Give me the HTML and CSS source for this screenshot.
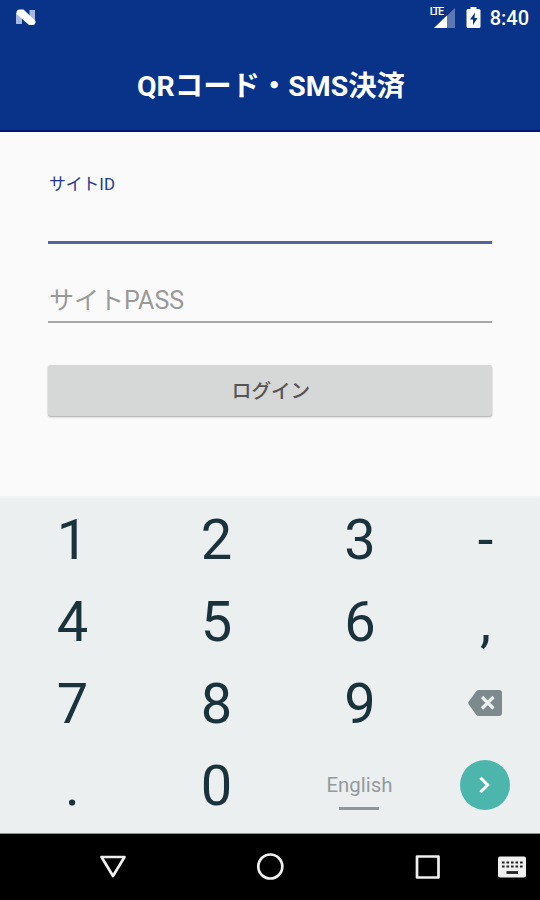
FILE: index.html
```
<!DOCTYPE html>
<html lang="ja">
<head>
  <meta charset="UTF-8" />
  <meta name="viewport" content="width=device-width, initial-scale=1" />
  <title>QRコード・SMS決済</title>
  <link rel="stylesheet" href="styles.css">
</head>
<body>
  <!-- Status bar -->
  <div class="status-bar">
    <svg class="icon-n" width="22" height="18" viewBox="0 0 22 18">
      <path d="M1 4h6v11H1zM14.500 1H20v13h-5.500z" fill="#a9b8de" />
      <path d="M4 .5h4.500L20.500 12v1.500q-.5 2.500-3 2.500H14L1.500 5V3Q2 .5 4 .5z" fill="#fff" />
    </svg>
    <div class="status-icons">
      <div class="signal">
        <span class="lte">LTE</span>
        <svg width="22" height="21" viewBox="0 0 22 21">
          <path d="M21 0v20H0z" fill="#5c78b3" />
          <path d="M13 7.500V20H0z" fill="#fff" />
        </svg>
      </div>
      <svg class="battery" width="15" height="22" viewBox="0 0 15 22">
        <path d="M4.500 0h6v2H13q1.500 0 1.500 1.500v16q0 1.500-1.500 1.500H2q-1.500 0-1.500-1.500v-16Q.5 2 2 2h2.500z" fill="#fff" />
        <path d="M9 5.500L4 12.500h3V18l4.500-7h-3z" fill="#083388" />
      </svg>
      <span class="clock">8:40</span>
    </div>
  </div>

  <!-- Title -->
  <header class="app-bar">
    <h1>QRコード・SMS決済</h1>
  </header>

  <!-- Login form -->
  <main class="login">
    <div class="field active">
      <label>サイトID</label>
    </div>
    <div class="field">
      <label>サイトPASS</label>
    </div>
    <button class="login-button" type="button">ログイン</button>
  </main>

  <!-- Keyboard -->
  <div class="keyboard">
    <div class="key">1</div>
    <div class="key">2</div>
    <div class="key">3</div>
    <div class="key">-</div>
    <div class="key">4</div>
    <div class="key">5</div>
    <div class="key">6</div>
    <div class="key">,</div>
    <div class="key">7</div>
    <div class="key">8</div>
    <div class="key">9</div>
    <div class="key action">
      <svg width="34" height="26" viewBox="0 0 34 26">
        <path d="M10.500 0H31q3 0 3 3v20q0 3-3 3H10.500q-1.500 0-2.500-1.500L.6 14.200q-.7-1.200 0-2.400L8 1.500Q9 0 10.500 0z" fill="#7c898d" />
        <path d="M14 7l11.500 11.500M25.500 7L14 18.500" stroke="#eceff0" stroke-width="3.200" />
      </svg>
    </div>
    <div class="key">.</div>
    <div class="key">0</div>
    <div class="key lang">English</div>
    <div class="key action">
      <span class="enter">
        <svg width="14" height="20" viewBox="0 0 14 20">
          <path d="M2.500 2.800L9.700 10l-7.200 7.200" fill="none" stroke="#fff" stroke-width="3" />
        </svg>
      </span>
    </div>
  </div>

  <!-- Navigation bar -->
  <nav class="nav-bar">
    <svg width="540" height="66" viewBox="0 0 540 66" fill="none" stroke="#f0f0f0" stroke-width="2.700" stroke-linejoin="round">
      <path d="M101.500 23h23L113 42z" />
      <circle cx="270.300" cy="32.500" r="12" />
      <rect x="417" y="22.500" width="21.500" height="21" />
      <rect x="498" y="22.500" width="28" height="21" rx="2" fill="#f0f0f0" stroke="none" />
      <path d="M502 28.500h21M502 32.500h21" stroke="#222" stroke-width="2.200" stroke-dasharray="2.600 1.900" />
      <path d="M506.500 38.500h11.500" stroke="#222" stroke-width="2.800" />
    </svg>
  </nav>
</body>
</html>
```
FILE: styles.css
```
* {
  box-sizing: border-box;
}

body {
  margin: 0;
  width: 540px;
  height: 900px;
  display: flex;
  flex-direction: column;
  overflow: hidden;
  background: #fafafa;
  font-family: Roboto, "Noto Sans CJK JP", sans-serif;
}

/* Status bar */
.status-bar {
  height: 36px;
  flex: none;
  display: flex;
  align-items: center;
  justify-content: space-between;
  padding: 0 11px 0 15px;
  background: #083388;
  color: #fff;
}

.status-icons {
  display: flex;
  align-items: center;
}

.signal {
  position: relative;
  height: 21px;
  padding-left: 4px;
  margin-right: 10px;
}

.signal svg {
  display: block;
}

.lte {
  position: absolute;
  left: 0;
  top: -1px;
  font-size: 11px;
  line-height: 10px;
  font-weight: 500;
  letter-spacing: -1.5px;
}

.battery {
  margin-right: 9px;
}

.clock {
  font-size: 20px;
  font-weight: 500;
  line-height: 36px;
}

/* Title */
.app-bar {
  height: 96px;
  flex: none;
  display: flex;
  align-items: center;
  justify-content: center;
  padding-top: 7px;
  background: #083388;
  border-bottom: 2px solid #00137c;
  color: #fff;
}

h1 {
  margin: 0 0 0 2px;
  font-size: 28.400px;
  font-weight: 700;
  line-height: 40px;
}

/* Login form */
.login {
  height: 364px;
  flex: none;
  padding: 40px 48px 0;
}

.field {
  height: 79px;
  display: flex;
  align-items: flex-end;
  padding: 0 0 4px 1px;
  border-bottom: 2px solid #a6a6a6;
  color: #999;
  font-size: 25px;
  line-height: 32px;
}

.field.active {
  height: 72px;
  align-items: flex-start;
  padding: 0 0 0 1px;
  border-bottom: 3px solid #57649b;
  color: #24388f;
  font-size: 16.800px;
  line-height: 24px;
}

.login-button {
  display: block;
  width: 100%;
  height: 51px;
  margin-top: 42px;
  padding: 0 0 2px 2px;
  border: 0;
  border-radius: 3px;
  background: #d6d7d7;
  box-shadow: 0 1px 2px rgba(0, 0, 0, 0.35);
  color: #555;
  font-family: inherit;
  font-size: 19.600px;
  font-weight: 500;
}

/* Keyboard */
.keyboard {
  height: 338px;
  flex: none;
  display: grid;
  grid-template-columns: 144px 144px 143px 108px;
  grid-template-rows: repeat(4, 82px);
  border-top: 2px solid #f1f3f4;
  border-bottom: 1px solid #8d8f90;
  background: #eceff0;
  color: #19323c;
}

.key {
  display: flex;
  align-items: center;
  justify-content: center;
  padding: 2px 0 0 1px;
  font-size: 56px;
  line-height: 80px;
}

.key.action {
  padding: 0;
}

.key.lang {
  position: relative;
  padding: 0;
  color: #939a9e;
  font-size: 20.400px;
}

.lang::after {
  content: "";
  position: absolute;
  left: 51px;
  bottom: 16px;
  width: 40px;
  height: 3px;
  background: #8f979a;
}

.enter {
  display: flex;
  align-items: center;
  justify-content: center;
  width: 50px;
  height: 50px;
  border-radius: 50%;
  background: #4db6ac;
}

/* Navigation bar */
.nav-bar {
  height: 66px;
  flex: none;
  background: #000;
}

.nav-bar svg {
  display: block;
}
```
